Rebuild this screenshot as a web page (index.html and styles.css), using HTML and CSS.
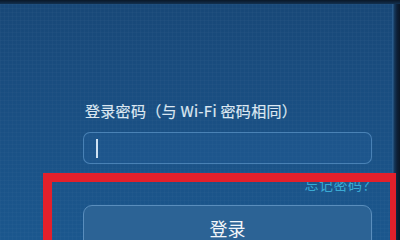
FILE: index.html
```html
<!DOCTYPE html>
<html lang="zh-CN">
<head>
<meta charset="utf-8">
<title>登录</title>
<link rel="stylesheet" href="styles.css">
</head>
<body>
<div class="screen">
  <div class="topbar"></div>
  <div class="main">
    <div class="panel">
      <label class="label" for="pwd">登录密码（与 Wi-Fi 密码相同）</label>
      <div class="input" id="pwd"><span class="caret"></span></div>
      <div class="forgot-row"><span class="forgot">忘记密码？</span></div>
      <div class="button">登录</div>
    </div>
    <div class="edge"></div>
  </div>
  <div class="highlight"></div>
</div>
</body>
</html>
```

FILE: styles.css
```css
html, body {
  margin: 0;
  padding: 0;
  width: 400px;
  height: 240px;
  overflow: hidden;
  background: #1a4d7e;
  font-family: "Noto Sans CJK SC", "Noto Sans", sans-serif;
}

.screen {
  position: relative;
  width: 400px;
  height: 240px;
  display: flex;
  flex-direction: column;
  overflow: hidden;
}

.topbar {
  height: 4px;
  flex: none;
  background: linear-gradient(#0a1727, #12304f);
}

.main {
  flex: 1;
  display: flex;
  background-color: #1a4f82;
  background-image:
    linear-gradient(rgba(255,255,255,0.018) 1px, transparent 1px),
    linear-gradient(90deg, rgba(255,255,255,0.018) 1px, transparent 1px),
    linear-gradient(180deg, #184878 0%, #1a5084 50%, #1b588f 100%);
  background-size: 4px 4px, 4px 4px, 100% 100%;
}

.panel {
  flex: 1;
  display: flex;
  flex-direction: column;
  padding: 97px 0 0 83px;
  width: 289px;
}

.label {
  display: block;
  padding-left: 2px;
  font-size: 15px;
  line-height: 20px;
  letter-spacing: 0.3px;
  color: #dce7f1;
  white-space: nowrap;
  -webkit-text-stroke: 0.2px #dce7f1;
}

.input {
  margin-top: 11px;
  width: 289px;
  height: 32px;
  border: 1px solid rgba(110, 165, 215, 0.55);
  border-radius: 7px;
  background: rgba(40, 100, 160, 0.25);
  display: flex;
  align-items: center;
  padding-left: 12px;
  box-sizing: border-box;
}

.caret {
  width: 2px;
  height: 19px;
  background: #cfe2f3;
}

.forgot-row {
  width: 289px;
  display: flex;
  justify-content: flex-end;
  margin-top: 11px;
  box-sizing: border-box;
}

.forgot {
  font-size: 14px;
  line-height: 18px;
  letter-spacing: 0.5px;
  margin-right: -5px;
  color: #3aaad4;
}

.button {
  margin-top: 12px;
  width: 289px;
  height: 48px;
  border: 1px solid #5a8ebd;
  border-radius: 9px;
  background: #2c6395;
  color: #f2f6fa;
  font-size: 18px;
  line-height: 18px;
  padding-top: 13px;
  box-sizing: border-box;
  text-align: center;
  flex: none;
}

.edge {
  width: 8px;
  flex: none;
  background: linear-gradient(90deg, #2a5c8c 0, #2a5c8c 1px, #163b60 2px, #0d2038 5px, #0a1626 8px);
}

.highlight {
  position: absolute;
  left: 43px;
  top: 173px;
  right: 4px;
  bottom: -20px;
  border: 9px solid #e3202b;
  border-right-width: 6px;
  box-sizing: border-box;
}
```
